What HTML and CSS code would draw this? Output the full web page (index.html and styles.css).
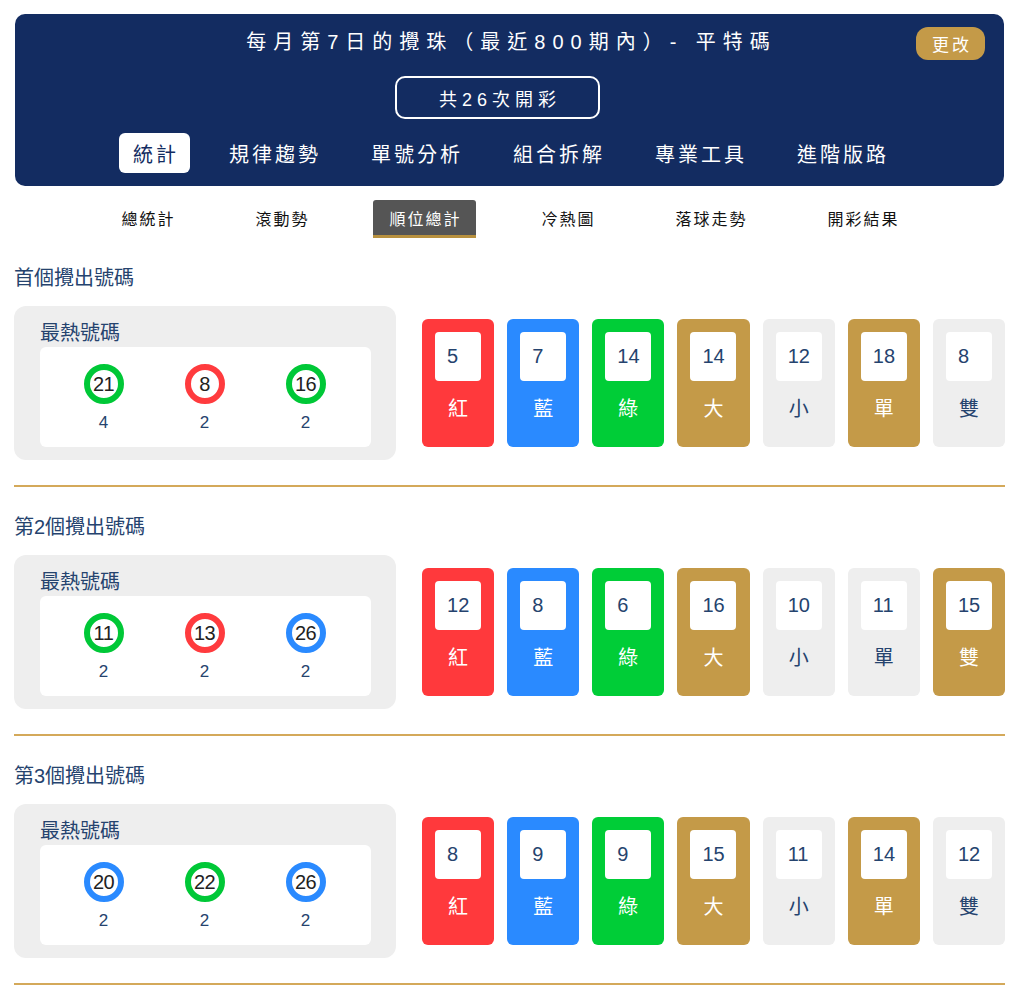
FILE: index.html
```html
<!DOCTYPE html>
<html lang="zh-Hant">
<head>
<meta charset="utf-8">
<title>順位總計</title>
<link rel="stylesheet" href="styles.css">
</head>
<body>
<div class="page">
  <header class="hero">
    <h1 class="hero-title">每月第7日的攪珠（最近800期內）- 平特碼</h1>
    <button class="change-btn">更改</button>
    <div class="count-box">共26次開彩</div>
    <nav class="main-tabs">
      <span class="main-tab active">統計</span>
      <span class="main-tab">規律趨勢</span>
      <span class="main-tab">單號分析</span>
      <span class="main-tab">組合拆解</span>
      <span class="main-tab">專業工具</span>
      <span class="main-tab">進階版路</span>
    </nav>
  </header>

  <nav class="sub-tabs">
    <span class="sub-tab">總統計</span>
    <span class="sub-tab">滾動勢</span>
    <span class="sub-tab active">順位總計</span>
    <span class="sub-tab">冷熱圖</span>
    <span class="sub-tab">落球走勢</span>
    <span class="sub-tab">開彩結果</span>
  </nav>

  <section class="pos-section">
    <h2 class="pos-title">首個攪出號碼</h2>
    <div class="pos-row">
      <div class="hot-card">
        <div class="hot-label">最熱號碼</div>
        <div class="hot-box">
          <div class="hot-item"><span class="ball green">21</span><span class="hot-count">4</span></div>
          <div class="hot-item"><span class="ball red">8</span><span class="hot-count">2</span></div>
          <div class="hot-item"><span class="ball green">16</span><span class="hot-count">2</span></div>
        </div>
      </div>
      <div class="stat-list">
        <div class="stat red"><span class="stat-num">5</span><span class="stat-label">紅</span></div>
        <div class="stat blue"><span class="stat-num">7</span><span class="stat-label">藍</span></div>
        <div class="stat green"><span class="stat-num">14</span><span class="stat-label">綠</span></div>
        <div class="stat gold"><span class="stat-num">14</span><span class="stat-label">大</span></div>
        <div class="stat grey"><span class="stat-num">12</span><span class="stat-label">小</span></div>
        <div class="stat gold"><span class="stat-num">18</span><span class="stat-label">單</span></div>
        <div class="stat grey"><span class="stat-num">8</span><span class="stat-label">雙</span></div>
      </div>
    </div>
    <hr class="divider">
  </section>

  <section class="pos-section">
    <h2 class="pos-title">第2個攪出號碼</h2>
    <div class="pos-row">
      <div class="hot-card">
        <div class="hot-label">最熱號碼</div>
        <div class="hot-box">
          <div class="hot-item"><span class="ball green">11</span><span class="hot-count">2</span></div>
          <div class="hot-item"><span class="ball red">13</span><span class="hot-count">2</span></div>
          <div class="hot-item"><span class="ball blue">26</span><span class="hot-count">2</span></div>
        </div>
      </div>
      <div class="stat-list">
        <div class="stat red"><span class="stat-num">12</span><span class="stat-label">紅</span></div>
        <div class="stat blue"><span class="stat-num">8</span><span class="stat-label">藍</span></div>
        <div class="stat green"><span class="stat-num">6</span><span class="stat-label">綠</span></div>
        <div class="stat gold"><span class="stat-num">16</span><span class="stat-label">大</span></div>
        <div class="stat grey"><span class="stat-num">10</span><span class="stat-label">小</span></div>
        <div class="stat grey"><span class="stat-num">11</span><span class="stat-label">單</span></div>
        <div class="stat gold"><span class="stat-num">15</span><span class="stat-label">雙</span></div>
      </div>
    </div>
    <hr class="divider">
  </section>

  <section class="pos-section">
    <h2 class="pos-title">第3個攪出號碼</h2>
    <div class="pos-row">
      <div class="hot-card">
        <div class="hot-label">最熱號碼</div>
        <div class="hot-box">
          <div class="hot-item"><span class="ball blue">20</span><span class="hot-count">2</span></div>
          <div class="hot-item"><span class="ball green">22</span><span class="hot-count">2</span></div>
          <div class="hot-item"><span class="ball blue">26</span><span class="hot-count">2</span></div>
        </div>
      </div>
      <div class="stat-list">
        <div class="stat red"><span class="stat-num">8</span><span class="stat-label">紅</span></div>
        <div class="stat blue"><span class="stat-num">9</span><span class="stat-label">藍</span></div>
        <div class="stat green"><span class="stat-num">9</span><span class="stat-label">綠</span></div>
        <div class="stat gold"><span class="stat-num">15</span><span class="stat-label">大</span></div>
        <div class="stat grey"><span class="stat-num">11</span><span class="stat-label">小</span></div>
        <div class="stat gold"><span class="stat-num">14</span><span class="stat-label">單</span></div>
        <div class="stat grey"><span class="stat-num">12</span><span class="stat-label">雙</span></div>
      </div>
    </div>
    <hr class="divider">
  </section>
</div>
</body>
</html>
```

FILE: styles.css
```css
* { box-sizing: border-box; }
html, body { margin: 0; padding: 0; background: #fff; }
body {
  font-family: "Liberation Sans", "Noto Sans CJK TC", sans-serif;
  color: #1f3b68;
}
.page {
  padding: 14px 18px 0 14px;
}
.hero {
  position: relative;
  margin: 0 1px;
  background: #132c61;
  border-radius: 10px;
  padding: 13px 0 13px;
  display: flex;
  flex-direction: column;
  align-items: center;
}
.hero-title {
  margin: 0 0 0 4px;
  font-size: 20px;
  font-weight: 400;
  line-height: 30px;
  letter-spacing: 7px;
  color: #fff;
}
.change-btn {
  position: absolute;
  top: 13px;
  right: 19px;
  width: 69px;
  height: 33px;
  border: 0;
  border-radius: 12px;
  background: #c49a48;
  color: #fff;
  font-family: inherit;
  font-size: 17px;
  letter-spacing: 3px;
  padding: 0 0 0 3px;
}
.count-box {
  margin: 19px 24px 0 0;
  width: 205px;
  height: 43px;
  border: 2px solid #fff;
  border-radius: 10px;
  color: #fff;
  font-size: 18px;
  letter-spacing: 5px;
  padding-left: 5px;
  display: flex;
  align-items: center;
  justify-content: center;
}
.main-tabs {
  margin-top: 14px;
  display: flex;
  gap: 25px;
}
.main-tab {
  height: 40px;
  padding: 0 11px 0 14px;
  border-radius: 6px;
  color: #fff;
  font-size: 20px;
  letter-spacing: 3px;
  display: flex;
  align-items: center;
}
.main-tab.active {
  background: #fff;
  color: #132c61;
}
.sub-tabs {
  margin-top: 14px;
  display: flex;
  justify-content: center;
  gap: 50px;
}
.sub-tab {
  height: 38px;
  padding: 0 14px 0 16px;
  font-size: 16px;
  letter-spacing: 2px;
  color: #111;
  display: flex;
  align-items: center;
  border-bottom: 3px solid transparent;
  border-radius: 3px 3px 0 0;
}
.sub-tab.active {
  background: #555;
  color: #fff;
  border-bottom-color: #b8913f;
}
.pos-section {
  padding-top: 26px;
}
.pos-title {
  margin: 0 0 14px;
  font-size: 20px;
  font-weight: 400;
  line-height: 28px;
  color: #25436e;
}
.pos-row {
  display: flex;
  align-items: center;
  gap: 26px;
}
.hot-card {
  width: 382px;
  flex: none;
  background: #eeeeee;
  border-radius: 12px;
  padding: 13px 25px 13px 26px;
}
.hot-label {
  font-size: 20px;
  line-height: 28px;
  color: #25436e;
}
.hot-box {
  background: #fff;
  border-radius: 6px;
  height: 100px;
  padding: 17px 15px 0 13px;
  display: flex;
}
.hot-item {
  flex: 1;
  display: flex;
  flex-direction: column;
  align-items: center;
}
.ball {
  width: 40px;
  height: 40px;
  border-radius: 50%;
  border: 6px solid #00c837;
  display: flex;
  align-items: center;
  justify-content: center;
  font-size: 20px;
  color: #222;
  letter-spacing: -0.5px;
}
.ball.red { border-color: #ff3b3e; }
.ball.green { border-color: #00c837; }
.ball.blue { border-color: #2a8aff; }
.hot-count {
  margin-top: 8px;
  font-size: 17px;
  line-height: 22px;
  color: #25436e;
}
.stat-list {
  flex: 1;
  display: flex;
  gap: 13px;
}
.stat {
  flex: 1;
  height: 128px;
  border-radius: 6px;
  padding-top: 13px;
  display: flex;
  flex-direction: column;
  align-items: center;
}
.stat.red { background: #ff393c; }
.stat.blue { background: #2a8aff; }
.stat.green { background: #00cd37; }
.stat.gold { background: #c49a48; }
.stat.grey { background: #eeeeee; }
.stat-num {
  width: 46px;
  height: 49px;
  background: #fff;
  border-radius: 4px;
  padding-left: 12px;
  font-size: 20px;
  color: #25436e;
  display: flex;
  align-items: center;
}
.stat-label {
  margin-top: 13px;
  font-size: 20px;
  line-height: 30px;
  color: #fff;
}
.stat.grey .stat-label { color: #25436e; }
.divider {
  margin: 25px 0 0;
  border: 0;
  height: 2px;
  background: #d4a95a;
}
```
